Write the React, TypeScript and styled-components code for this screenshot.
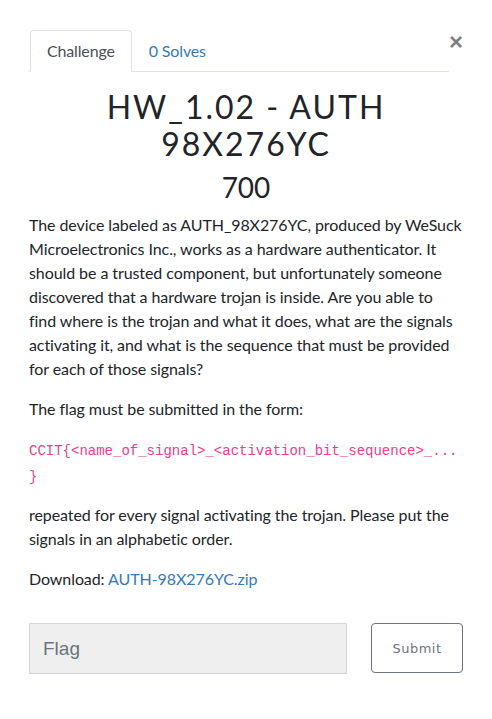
import { useState } from 'react'
import styled, { createGlobalStyle } from 'styled-components'

const GlobalStyle = createGlobalStyle`
  body {
    margin: 0;
    background: #fff;
    font-family: Lato, 'Noto Sans', sans-serif;
    color: #212529;
  }
`

const App = () => {
  const [tab, setTab] = useState('challenge')
  const [flag, setFlag] = useState('')

  return (
    <Container>
      <GlobalStyle />
      <Header>
        <Tabs>
          <Tab active={tab === 'challenge'} onClick={() => setTab('challenge')}>
            Challenge
          </Tab>
          <Tab active={tab === 'solves'} onClick={() => setTab('solves')}>
            0 Solves
          </Tab>
        </Tabs>
        <Close aria-label='Close'>×</Close>
      </Header>
      <Title>HW_1.02 - AUTH 98X276YC</Title>
      <Value>700</Value>
      <Description>
        <Paragraph>
          The device labeled as AUTH_98X276YC, produced by WeSuck Microelectronics Inc.,
          works as a hardware authenticator. It should be a trusted component, but
          unfortunately someone discovered that a hardware trojan is inside. Are you able
          to find where is the trojan and what it does, what are the signals activating
          it, and what is the sequence that must be provided for each of those signals?
        </Paragraph>
        <Paragraph>The flag must be submitted in the form:</Paragraph>
        <CodeParagraph>
          <Code>{'CCIT{<name_of_signal>_<activation_bit_sequence>_...}'}</Code>
        </CodeParagraph>
        <Paragraph>
          repeated for every signal activating the trojan. Please put the signals in an
          alphabetic order.
        </Paragraph>
        <Paragraph>
          Download: <Link href='#'>AUTH-98X276YC.zip</Link>
        </Paragraph>
      </Description>
      <SubmitRow>
        <FlagInput
          placeholder='Flag'
          value={flag}
          onChange={(e) => setFlag(e.target.value)}
        />
        <SubmitButton>Submit</SubmitButton>
      </SubmitRow>
    </Container>
  )
}

export default App

const Container = styled.div`
  display: flex;
  flex-direction: column;
  padding: 30px 29px 40px 29px;
`

const Header = styled.div`
  display: flex;
  align-items: flex-start;
`

const Tabs = styled.div`
  flex: 1;
  display: flex;
  padding-left: 1px;
  border-bottom: 1px solid #dee2e6;
`

const Tab = styled.div<{ active?: boolean }>`
  padding: 8px 16px;
  margin-bottom: -1px;
  font-size: 16px;
  line-height: 24px;
  letter-spacing: -0.15px;
  cursor: pointer;
  border: 1px solid ${(p) => (p.active ? '#dee2e6' : 'transparent')};
  border-bottom-color: ${(p) => (p.active ? '#fff' : 'transparent')};
  border-radius: 4px 4px 0 0;
  background: ${(p) => (p.active ? '#fff' : 'transparent')};
  color: ${(p) => (p.active ? '#495057' : '#337ab7')};
`

const Close = styled.button`
  width: 14px;
  padding: 0;
  border: 0;
  background: transparent;
  font-family: 'Liberation Sans', Arial, sans-serif;
  font-size: 24px;
  font-weight: 700;
  line-height: 24px;
  color: #000;
  opacity: 0.5;
  cursor: pointer;
`

const Title = styled.h3`
  margin: 16px 0 0 0;
  text-align: center;
  font-family: Lato, sans-serif;
  font-weight: 400;
  font-size: 32px;
  line-height: 37px;
  letter-spacing: 2px;
  color: #212529;
`

const Value = styled.h4`
  margin: 8px 0 9px 0;
  text-align: center;
  font-family: Lato, sans-serif;
  font-weight: 400;
  font-size: 28px;
  line-height: 34px;
  color: #212529;
`

const Description = styled.div`
  font-size: 16px;
  line-height: 24px;
  letter-spacing: -0.08px;
`

const Paragraph = styled.p`
  margin: 0 0 16px 0;
`

const CodeParagraph = styled(Paragraph)`
  margin-bottom: 14px;
`

const Code = styled.code`
  font-family: 'Liberation Mono', 'Courier New', monospace;
  font-size: 14px;
  letter-spacing: 0;
  color: #e83e8c;
  word-break: break-word;
  overflow-wrap: anywhere;
`

const Link = styled.a`
  color: #337ab7;
  text-decoration: none;
`

const SubmitRow = styled.div`
  display: flex;
  align-items: flex-start;
  gap: 24px;
  margin-top: 16px;
`

const FlagInput = styled.input`
  flex: 1;
  height: 51px;
  box-sizing: border-box;
  padding: 0 13px;
  border: 1px solid #ced4da;
  background: #efefef;
  font-family: 'Liberation Sans', Arial, sans-serif;
  font-size: 19px;
  color: #495057;
  outline: none;

  &::placeholder {
    color: #6c757d;
  }
`

const SubmitButton = styled.button`
  width: 92px;
  height: 50px;
  box-sizing: border-box;
  border: 1px solid #6c757d;
  border-radius: 4px;
  background: #fff;
  font-family: 'DejaVu Sans', sans-serif;
  font-size: 13px;
  letter-spacing: 0.5px;
  color: #6c757d;
  cursor: pointer;
`
